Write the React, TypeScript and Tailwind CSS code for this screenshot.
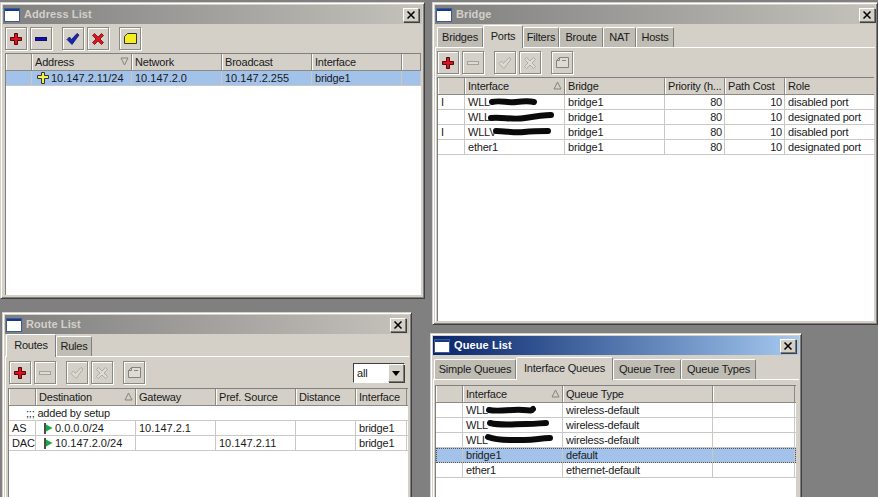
import type { ReactNode } from 'react';

type IconName = 'plus' | 'minus' | 'check' | 'cross' | 'note';

const RAISED = 'border border-t-white border-l-white border-r-[#7b7b76] border-b-[#7b7b76] shadow-[1px_1px_0_#404040]';

function ToolIcon({ name, enabled }: { name: IconName; enabled: boolean }) {
  const line = '#a3a198';
  const blank = '#dedbd4';
  if (name === 'plus') {
    return (
      <svg width="14" height="14" viewBox="0 0 14 14">
        <path d="M5.500 1.500h3v4h4v3h-4v4h-3v-4h-4v-3h4z" fill={enabled ? '#e0101c' : blank} stroke={enabled ? '#4a0a10' : line} />
      </svg>
    );
  }
  if (name === 'minus') {
    return (
      <svg width="14" height="14" viewBox="0 0 14 14">
        <rect x="1.500" y="5.500" width="11" height="3" fill={enabled ? '#1010b0' : blank} stroke={enabled ? '#101060' : line} />
      </svg>
    );
  }
  if (name === 'check') {
    return (
      <svg width="14" height="14" viewBox="0 0 14 14">
        <path d="M1 7.500l2.500-2.500 2 2.500L11 1.500l2 1.500-7 9.500z" fill={enabled ? '#1428b4' : blank} stroke={enabled ? '#0a1460' : line} strokeWidth="0.8" />
      </svg>
    );
  }
  if (name === 'cross') {
    return (
      <svg width="14" height="14" viewBox="0 0 14 14">
        <path d="M1.500 3.500l2-2L7 5l3.500-3.500 2 2L9 7l3.500 3.500-2 2L7 9l-3.500 3.500-2-2L5 7z" fill={enabled ? '#dc1420' : blank} stroke={enabled ? '#6a1014' : line} strokeWidth="0.8" />
      </svg>
    );
  }
  return (
    <svg width="15" height="13" viewBox="0 0 15 13">
      <path d="M1.500 4.500l3-3h9v10h-12z" fill={enabled ? '#f5ee1e' : blank} stroke={enabled ? '#333' : '#85837c'} />
      {!enabled && <path d="M1.500 4.500h3v-3M7 4.500h4" fill="none" stroke="#85837c" />}
    </svg>
  );
}

function ToolButton({ name, enabled, className = '' }: { name: IconName; enabled: boolean; className?: string }) {
  return (
    <div className={`w-[22px] h-[23px] flex items-center justify-center border border-[#8c8a84] shadow-[1px_1px_0_white,inset_1px_1px_0_white] ${className}`}>
      <ToolIcon name={name} enabled={enabled} />
    </div>
  );
}

function Toolbar({ enabled, className = '', children }: { enabled: boolean; className?: string; children?: ReactNode }) {
  return (
    <div className={`flex items-start h-[23px] shrink-0 ${className}`}>
      <ToolButton name="plus" enabled />
      <ToolButton name="minus" enabled={enabled} className="ml-[3px]" />
      <ToolButton name="check" enabled={enabled} className="ml-[10px]" />
      <ToolButton name="cross" enabled={enabled} className="ml-[3px]" />
      <ToolButton name="note" enabled={enabled} className="ml-[10px]" />
      {children}
    </div>
  );
}

function Tabs({ tabs, active, top }: { tabs: [string, number][]; active: number; top: string }) {
  return (
    <div className={`flex items-end ${top}`}>
      {tabs.map(([label, width], i) =>
        i === active ? (
          <div
            key={label}
            style={{ width }}
            className="h-[23px] -mb-px z-10 bg-[#d4d0c8] border-t border-l border-white border-r border-r-[#808080] rounded-t-[2px] flex items-start justify-center pt-[2px]"
          >
            {label}
          </div>
        ) : (
          <div
            key={label}
            style={{ width }}
            className="h-[20px] bg-[#bfbcb4] border-t border-l border-white border-r border-r-[#808080] rounded-t-[2px] flex items-center justify-center"
          >
            {label}
          </div>
        ),
      )}
    </div>
  );
}

function Scribble({ d, className }: { d: string; className: string }) {
  return (
    <svg className={`absolute ${className}`} width="70" height="12" viewBox="0 0 70 12">
      <path d={d} fill="none" stroke="#0a0a0a" strokeWidth="6" strokeLinecap="round" strokeLinejoin="round" />
    </svg>
  );
}

// digits are wider in the original font, so addresses drop the global tracking
function Ip({ children }: { children: ReactNode }) {
  return <span className="tracking-normal">{children}</span>;
}

type Row = ReactNode[] | string;
type SortDir = 'up' | 'down';

function ListTable({
  widths,
  headers,
  rows,
  sortCol,
  sortDir = 'up',
  rightCols = [],
  selected,
  dotted,
}: {
  widths: number[];
  headers: string[];
  rows: Row[];
  sortCol: number;
  sortDir?: SortDir;
  rightCols?: number[];
  selected?: number;
  dotted?: boolean;
}) {
  return (
    <div className="flex-1 min-h-0 bg-white border-t border-l border-[#808080] overflow-hidden">
      <div className="flex h-[17px] bg-[#d4d0c8] border-b border-[#8c8a84]">
        {widths.map((w, i) => (
          <div
            key={i}
            style={{ width: w }}
            className="relative shrink-0 border-l border-white border-r border-r-[#8c8a84] pl-[2px] leading-[16px] whitespace-nowrap overflow-hidden"
          >
            {headers[i]}
            {i === sortCol && (
              <svg className="absolute right-[2px] top-[3px]" width="9" height="9" viewBox="0 0 9 9">
                <path d={sortDir === 'up' ? 'M4.500 1L8 8H1z' : 'M1 1h7L4.500 8z'} fill="#d4d0c8" stroke="#85837c" />
              </svg>
            )}
          </div>
        ))}
      </div>
      {rows.map((row, r) =>
        typeof row === 'string' ? (
          <div key={r} className="h-[15px] border-b border-[#c8c8c4] pl-[17px] leading-[14px] whitespace-nowrap">
            {row}
          </div>
        ) : (
          <div
            key={r}
            className={`flex h-[15px] border-b border-[#c8c8c4] ${r === selected ? 'bg-[#a3c2ea]' : ''} ${
              r === selected && dotted ? 'outline outline-1 outline-dotted outline-[#555] -outline-offset-1' : ''
            }`}
          >
            {widths.map((w, i) => (
              <div
                key={i}
                style={{ width: w }}
                className={`relative shrink-0 border-r border-[#c8c8c4] pl-[3px] pr-[2px] leading-[14px] whitespace-nowrap overflow-hidden ${
                  rightCols.includes(i) ? 'text-right' : ''
                }`}
              >
                {row[i]}
              </div>
            ))}
          </div>
        ),
      )}
    </div>
  );
}

function Window({
  title,
  active,
  className,
  titlePad = 'pr-[3px]',
  children,
}: {
  title: string;
  active?: boolean;
  className: string;
  titlePad?: string;
  children: ReactNode;
}) {
  return (
    <section
      className={`absolute flex flex-col bg-[#d4d0c8] border border-t-[#d4d0c8] border-l-[#d4d0c8] border-r-[#404040] border-b-[#404040] shadow-[inset_1px_1px_0_white,inset_-1px_-1px_0_#808080] p-[2px] ${className}`}
    >
      <header
        className={`h-[19px] shrink-0 flex items-center pl-[1px] ${titlePad} bg-gradient-to-r ${
          active ? 'from-[#0a246a] to-[#a6caf0]' : 'from-[#808080] to-[#c4c2bb]'
        }`}
      >
        <svg width="16" height="14" viewBox="0 0 16 14">
          <rect x="0.500" y="0.500" width="15" height="13" fill="#fff" stroke="#3a5a98" />
          <rect x="1" y="1" width="14" height="2" fill="#1a3a88" />
        </svg>
        <span className={`ml-[4px] font-bold text-[11px] tracking-[0.1px] ${active ? 'text-white' : 'text-[#d4d0c8]'}`}>{title}</span>
        <div className={`ml-auto w-[16px] h-[14px] bg-[#d4d0c8] flex items-center justify-center ${RAISED}`}>
          <svg width="8" height="8" viewBox="0 0 8 8">
            <path d="M0.500 0.500l7 7M7.500 0.500l-7 7" stroke="#000" strokeWidth="1.500" />
          </svg>
        </div>
      </header>
      {children}
    </section>
  );
}

function AddressIcon() {
  return (
    <svg className="inline-block align-[-2px] ml-[2px] mr-[2px]" width="12" height="12" viewBox="0 0 12 12">
      <path d="M4.500 0.500h3v3h4v3h-4v5h-3v-5h-4v-3h4z" fill="#f5ee50" stroke="#333" />
    </svg>
  );
}

function RouteFlag() {
  return (
    <svg className="inline-block align-[-2px] mr-[2px]" width="9" height="11" viewBox="0 0 9 11">
      <path d="M1 0v11" stroke="#101010" strokeWidth="1.500" />
      <path d="M2 1.500L8.500 5 2 8.500z" fill="#18a83c" />
    </svg>
  );
}

export default function App() {
  return (
    <div
      className="relative w-[878px] h-[497px] overflow-hidden bg-[#808080] text-[11px] tracking-[-0.2px] text-[#1a1a1a]"
      style={{ fontFamily: '"Liberation Sans", Arial, sans-serif' }}
    >
      <Window title="Address List" className="left-0 top-[2px] w-[425px] h-[297px]">
        <div className="flex-1 min-h-0 flex flex-col pl-[2px] pr-[1px] pt-[3px] pb-[1px]">
          <Toolbar enabled />
          <div className="h-[3px] shrink-0" />
          <ListTable
            widths={[26, 100, 90, 90, 90, 19]}
            headers={['', 'Address', 'Network', 'Broadcast', 'Interface', '']}
            sortCol={1}
            sortDir="down"
            selected={0}
            rows={[
              ['', <Ip><AddressIcon />10.147.2.11/24</Ip>, <Ip>10.147.2.0</Ip>, <Ip>10.147.2.255</Ip>, 'bridge1', ''],
            ]}
          />
        </div>
      </Window>

      <Window title="Bridge" titlePad="pr-0" className="left-[432px] top-[2px] w-[446px] h-[323px]">
        <Tabs
          top="pl-[2px] pt-[1px]"
          active={1}
          tabs={[['Bridges', 46], ['Ports', 40], ['Filters', 36], ['Broute', 44], ['NAT', 33], ['Hosts', 38]]}
        />
        <div className="flex-1 min-h-0 flex flex-col border-t border-l border-white pl-[1px] pr-[1px] pt-[3px] pb-[1px]">
          <Toolbar enabled={false} />
          <div className="h-[3px] shrink-0" />
          <ListTable
            widths={[27, 100, 100, 60, 60, 90]}
            headers={['', 'Interface', 'Bridge', 'Priority (h...', 'Path Cost', 'Role']}
            sortCol={1}
            rightCols={[3, 4]}
            rows={[
              ['I', <>WLL<Scribble className="left-[24px] top-[1px]" d="M3 6c8-2 16 1 24 0s14-1 18 0" /></>, 'bridge1', '80', '10', 'disabled port'],
              ['', <>WLL<Scribble className="left-[22px] top-[1px]" d="M4 7c12-1 22 2 34 0s18-3 26-3" /></>, 'bridge1', '80', '10', 'designated port'],
              ['I', <>WLLV<Scribble className="left-[27px] top-[1px]" d="M4 5c10 0 18 2 28 1s16-1 24-1" /></>, 'bridge1', '80', '10', 'disabled port'],
              ['', 'ether1', 'bridge1', '80', '10', 'designated port'],
            ]}
          />
        </div>
      </Window>

      <Window title="Route List" className="left-[2px] top-[312px] w-[410px] h-[195px]">
        <Tabs top="pl-[1px]" active={0} tabs={[['Routes', 50], ['Rules', 36]]} />
        <div className="flex-1 min-h-0 flex flex-col border-t border-l border-white pl-[2px] pr-[1px] pt-[4px] pb-[1px]">
          <Toolbar enabled={false} className="pl-[1px]">
            <div className="ml-auto mt-[2px] mr-[3px] w-[52px] h-[20px] bg-white border border-t-[#404040] border-l-[#404040] border-r-white border-b-white flex items-center pl-[3px]">
              all
              <div className={`ml-auto w-[16px] h-[18px] bg-[#d4d0c8] flex items-center justify-center ${RAISED}`}>
                <svg width="8" height="5" viewBox="0 0 8 5">
                  <path d="M0 0h8L4 5z" fill="#000" />
                </svg>
              </div>
            </div>
          </Toolbar>
          <div className="h-[4px] shrink-0" />
          <ListTable
            widths={[27, 100, 80, 80, 60, 51]}
            headers={['', 'Destination', 'Gateway', 'Pref. Source', 'Distance', 'Interface']}
            sortCol={1}
            rows={[
              ';;; added by setup',
              ['AS', <span className="pl-[5px]"><RouteFlag /><Ip>0.0.0.0/24</Ip></span>, <Ip>10.147.2.1</Ip>, '', '', 'bridge1'],
              ['DAC', <span className="pl-[5px]"><RouteFlag /><Ip>10.147.2.0/24</Ip></span>, '', <Ip>10.147.2.11</Ip>, '', 'bridge1'],
            ]}
          />
        </div>
      </Window>

      <Window title="Queue List" active className="left-[430px] top-[333px] w-[372px] h-[175px]">
        <Tabs
          top="pl-[1px] pt-[2px]"
          active={1}
          tabs={[['Simple Queues', 82], ['Interface Queues', 97], ['Queue Tree', 68], ['Queue Types', 75]]}
        />
        <div className="flex-1 min-h-0 flex flex-col border-t border-l border-white pl-[1px] pr-[3px] pt-[5px] pb-[1px]">
          <ListTable
            widths={[27, 100, 150, 82]}
            headers={['', 'Interface', 'Queue Type', '']}
            sortCol={1}
            selected={3}
            dotted
            rows={[
              ['', <>WLL<Scribble className="left-[22px] top-[1px]" d="M4 6c10 2 22-1 34 0s8 0 10-1" /></>, 'wireless-default', ''],
              ['', <>WLL<Scribble className="left-[23px] top-[0px]" d="M4 5c12 3 24 1 36 1s14-1 20-1" /></>, 'wireless-default', ''],
              ['', <>WLL<Scribble className="left-[21px] top-[0px]" d="M4 4c10 4 24 3 36 3s16-2 26-2" /></>, 'wireless-default', ''],
              ['', 'bridge1', 'default', ''],
              ['', 'ether1', 'ethernet-default', ''],
            ]}
          />
        </div>
      </Window>
    </div>
  );
}
